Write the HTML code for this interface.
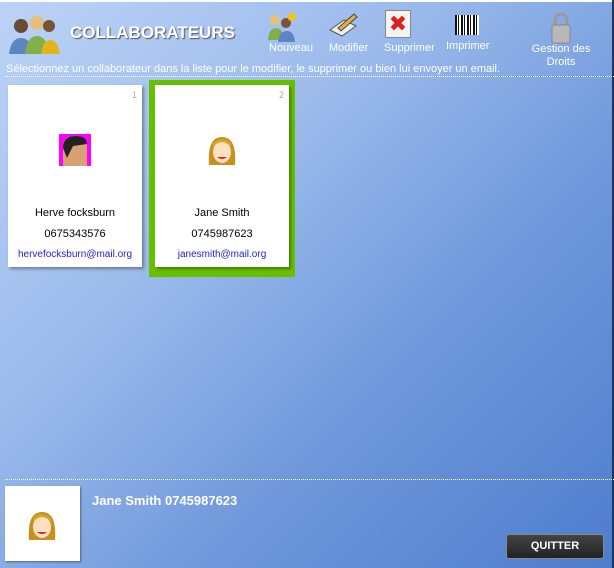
<!DOCTYPE html><html><head><style>
body{margin:0;width:614px;height:568px;overflow:hidden;position:relative;font-family:"Liberation Sans","DejaVu Sans",sans-serif;background:linear-gradient(135deg,#bcd3f6 0%,#9cbbec 35%,#6f98db 65%,#4e7dcd 100%);}
.a{position:absolute}
.t{color:#fff;font-size:11px}
.card{position:absolute;background:#fff;width:134px;height:182px;box-shadow:2px 2px 3px rgba(0,0,0,.35);text-align:center;font-size:11px;color:#000}
.card .n{position:absolute;right:5px;top:5px;color:#aaa;font-size:9px}
.dots{position:absolute;left:5px;right:0;border-top:1px dotted #fff;height:0}
</style></head><body>
<div class="a" style="left:0;top:0;width:614px;height:2px;background:#fff"></div>
<div class="a" style="right:0;top:0;width:2px;height:568px;background:#23345a"></div>
<svg class="a" style="left:9px;top:12px" width="52" height="44"><circle cx="12" cy="14" r="7" fill="#6b4a35"/><path d="M0 42 q2-16 12-16 q10 0 12 16z" fill="#5c86c2"/><circle cx="28" cy="11" r="7" fill="#e6c07a"/><path d="M16 42 q2-18 12-18 q10 0 12 18z" fill="#7fb04a"/><circle cx="40" cy="14" r="6" fill="#7a5238"/><path d="M32 42 q2-14 9-14 q8 0 10 14z" fill="#e1b520"/></svg>
<div class="a t" style="left:70px;top:23px;font-size:17px;font-weight:bold;text-shadow:1px 1px 1px #556">COLLABORATEURS</div>
<svg class="a" style="left:266px;top:12px" width="32" height="30"><circle cx="9" cy="8" r="5" fill="#e6c07a"/><path d="M2 28 q1-12 8-12 q7 0 8 12z" fill="#7fb04a"/><circle cx="20" cy="11" r="5" fill="#7a5238"/><path d="M12 30 q1-11 9-11 q7 0 8 11z" fill="#5c86c2"/><text x="20" y="10" fill="#f6c510" font-size="14">✸</text></svg>
<div class="a t" style="left:269px;top:42px;font-size:11px">Nouveau</div>
<svg class="a" style="left:328px;top:12px" width="30" height="26"><path d="M2 18 l14-10 12 6-14 10z" fill="#eee" stroke="#555"/><path d="M10 16 l16-14 3 3-16 14z" fill="#e0b040" stroke="#444"/></svg>
<div class="a t" style="left:329px;top:42px;font-size:11px">Modifier</div>
<div class="a" style="left:385px;top:10px;width:24px;height:26px;background:#f4f4f4;border:1px solid #888;color:#e02020;font-size:22px;line-height:26px;text-align:center;font-weight:bold">✖</div>
<div class="a t" style="left:384px;top:42px;font-size:11px">Supprimer</div>
<div class="a" style="left:455px;top:15px;width:24px;height:20px;background:repeating-linear-gradient(90deg,#111 0 2px,#fff 2px 3px,#111 3px 4px,#fff 4px 6px)"></div>
<div class="a t" style="left:446px;top:40px;font-size:11px">Imprimer</div>
<svg class="a" style="left:549px;top:10px" width="24" height="34"><path d="M6 16 v-6 a6 6 0 0 1 12 0 v6" fill="none" stroke="#999" stroke-width="3"/><rect x="3" y="15" width="18" height="18" rx="2" fill="#b8b8b8" stroke="#888"/></svg>
<div class="a t" style="left:530px;top:43px;font-size:11px;text-align:center;width:62px;line-height:13px">Gestion des Droits</div>
<div class="a t" style="left:6px;top:63px;font-size:11px">Sélectionnez un collaborateur dans la liste pour le modifier, le supprimer ou bien lui envoyer un email.</div>
<div class="dots" style="top:76px"></div>
<div class="card" style="left:8px;top:85px"><span class="n">1</span>
<div class="a" style="left:51px;top:49px;width:32px;height:32px;background:#f0f"><svg width="32" height="32"><path d="M4 32 v-20 q0-10 12-10 q12 0 12 10 v20z" fill="#d9a070"/><path d="M4 14 q0-12 12-12 q12 0 12 8 l-14 2 -6 12z" fill="#222"/></svg></div>
<div class="a" style="left:0;width:134px;top:122px">Herve focksburn</div>
<div class="a" style="left:0;width:134px;top:143px">0675343576</div>
<div class="a" style="left:0;width:134px;top:164px;color:#2222cc;font-size:10px">hervefocksburn@mail.org</div></div>
<div class="a" style="left:149px;top:80px;width:146px;height:197px;background:#66c000"></div>
<div class="card" style="left:155px;top:85px"><span class="n">2</span>
<svg class="a" style="left:50px;top:48px" width="34" height="34"><path d="M4 32 q-2-28 13-28 q15 0 13 28z" fill="#c8901c"/><ellipse cx="17" cy="19" rx="9" ry="11" fill="#fde0c0"/><path d="M8 14 q9-10 18 0 v-4 q-9-8-18 0z" fill="#d9a22a"/><path d="M12 24 q5 4 10 0" fill="#d22" /></svg>
<div class="a" style="left:0;width:134px;top:122px">Jane Smith</div>
<div class="a" style="left:0;width:134px;top:143px">0745987623</div>
<div class="a" style="left:0;width:134px;top:164px;color:#2222cc;font-size:10px">janesmith@mail.org</div></div>
<div class="dots" style="top:479px"></div>
<div class="a" style="left:5px;top:486px;width:75px;height:75px;background:#fff;box-shadow:1px 1px 2px rgba(0,0,0,.4)">
<svg class="a" style="left:20px;top:22px" width="34" height="34"><path d="M4 32 q-2-28 13-28 q15 0 13 28z" fill="#c8901c"/><ellipse cx="17" cy="19" rx="9" ry="11" fill="#fde0c0"/><path d="M8 14 q9-10 18 0 v-4 q-9-8-18 0z" fill="#d9a22a"/><path d="M12 24 q5 4 10 0" fill="#d22"/></svg></div>
<div class="a t" style="left:92px;top:493px;font-size:13px;font-weight:bold">Jane Smith 0745987623</div>
<div class="a" style="left:506px;top:534px;width:96px;height:23px;background:linear-gradient(#444,#222);border:1px solid #888;border-radius:3px;color:#fff;font-size:11px;text-align:center;line-height:23px;font-weight:bold">QUITTER</div>
</body></html>
